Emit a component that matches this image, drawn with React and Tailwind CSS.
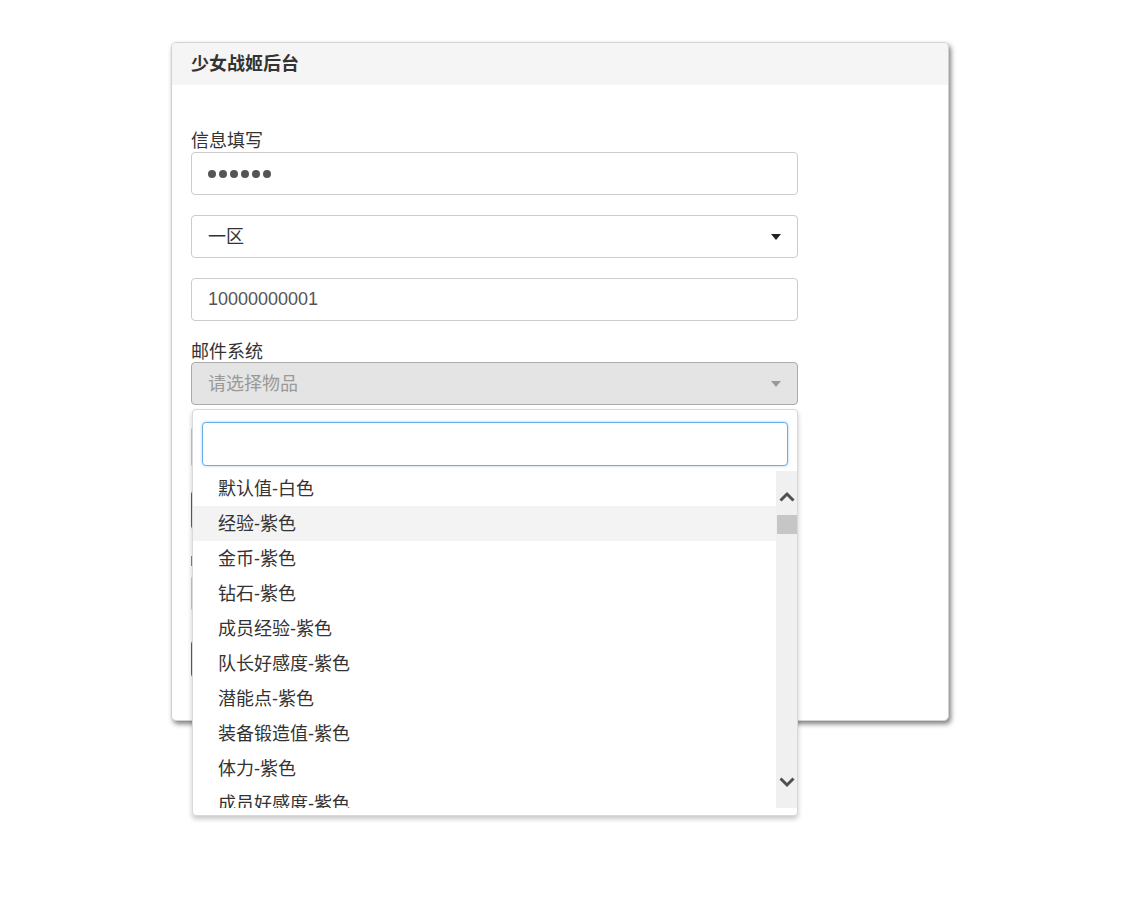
import React from "react";

const items = [
  "默认值-白色",
  "经验-紫色",
  "金币-紫色",
  "钻石-紫色",
  "成员经验-紫色",
  "队长好感度-紫色",
  "潜能点-紫色",
  "装备锻造值-紫色",
  "体力-紫色",
  "成员好感度-紫色",
];

const font = { fontFamily: '"Liberation Sans", "Noto Sans CJK SC", sans-serif' };

function Caret({ color }) {
  return (
    <svg width="10" height="6" viewBox="0 0 10 6" className="absolute right-[16px] top-1/2 -translate-y-1/2">
      <path d="M0 0 L10 0 L5 6 Z" fill={color} />
    </svg>
  );
}

export default function App() {
  return (
    <div className="min-h-[907px] w-full bg-white text-[#333] text-[18px]" style={font}>
      <div className="pt-[42px] pl-[171px]">
        <div className="w-[778px] rounded-[5px] border border-[#d2d2d2] bg-white shadow-[2px_3px_5px_rgba(0,0,0,0.5)]">
          <div className="h-[42px] rounded-t-[4px] bg-[#f5f5f5] px-[19px] flex items-center font-bold text-[18px] text-[#333]">
            少女战姬后台
          </div>
          <div className="px-[19px] pt-[46px] pb-[42px]">
            <div className="w-[607px]">
              <div className="h-[20px] leading-[20px]">信息填写</div>
              <div className="mt-[1px] h-[43px] rounded-[4px] border border-[#ccc] bg-white flex items-center pl-[16px] gap-[3px]">
                {[0, 1, 2, 3, 4, 5].map((i) => (
                  <span key={i} className="block w-[8px] h-[8px] rounded-full bg-[#555]" />
                ))}
              </div>
              <div className="relative mt-[20px] h-[43px] rounded-[4px] border border-[#ccc] bg-white flex items-center pl-[16px] pt-[2px] text-[#333]">
                一区
                <Caret color="#222" />
              </div>
              <div className="mt-[20px] h-[43px] rounded-[4px] border border-[#ccc] bg-white flex items-center pl-[16px] text-[#555]">
                10000000001
              </div>
              <div className="mt-[21px] h-[20px] leading-[20px]">邮件系统</div>
              <div className="relative">
                <div className="relative h-[43px] rounded-[4px] border border-[#aaa] bg-[#e4e4e4] flex items-center pl-[16px] pt-[2px] text-[#999]">
                  请选择物品
                  <Caret color="#999" />
                </div>

                {/* dropdown overlay */}
                <div className="absolute left-[1px] top-[47px] z-10 w-[606px] h-[407px] rounded-[4px] border border-[#d9d9d9] bg-white shadow-[0_3px_5px_rgba(0,0,0,0.22)] flex flex-col">
                  <div className="px-[9px] pt-[12px]">
                    <div className="h-[44px] rounded-[4px] border border-[#66afe9] bg-white shadow-[0_0_3px_rgba(102,175,233,0.6)]" />
                  </div>
                  <div className="mt-[5px] flex h-[337px] overflow-hidden">
                    <div className="flex-1 overflow-hidden">
                      {items.map((t, i) => (
                        <div
                          key={t}
                          className={
                            "h-[35px] flex items-center pl-[25px] pt-[2px] text-[#333] " +
                            (i === 1 ? "bg-[#f3f3f3]" : "bg-white")
                          }
                        >
                          {t}
                        </div>
                      ))}
                    </div>
                    <div className="w-[21px] bg-[#f0f0f0] flex flex-col items-center">
                      <svg width="16" height="11" viewBox="0 0 16 11" className="mt-[20px]">
                        <path d="M1.5 9.5 L8 3 L14.5 9.5" stroke="#505050" strokeWidth="3" fill="none" />
                      </svg>
                      <div className="mt-[13px] w-[20px] h-[19px] bg-[#c6c6c6]" />
                      <div className="flex-1" />
                      <svg width="16" height="11" viewBox="0 0 16 11" className="mb-[20px]">
                        <path d="M1.5 1.5 L8 8 L14.5 1.5" stroke="#505050" strokeWidth="3" fill="none" />
                      </svg>
                    </div>
                  </div>
                </div>
              </div>

              {/* content beneath the dropdown */}
              <div className="mt-[21px] h-[42px] rounded-[4px] border border-[#ccc] bg-white" />
              <div className="mt-[22px] h-[40px] rounded-[4px] border border-[#2e6da4] bg-white" />
              <div className="mt-[20px] h-[22px] flex items-center">
                <span className="block w-[2px] h-[10px] bg-[#b07a45]" />
              </div>
              <div className="mt-[3px] h-[37px] rounded-[4px] border border-[#ccc] bg-white" />
              <div className="mt-[28px] h-[38px] rounded-[4px] border border-[#2e6da4] bg-[#337ab7]" />
            </div>
          </div>
        </div>
      </div>
    </div>
  );
}
